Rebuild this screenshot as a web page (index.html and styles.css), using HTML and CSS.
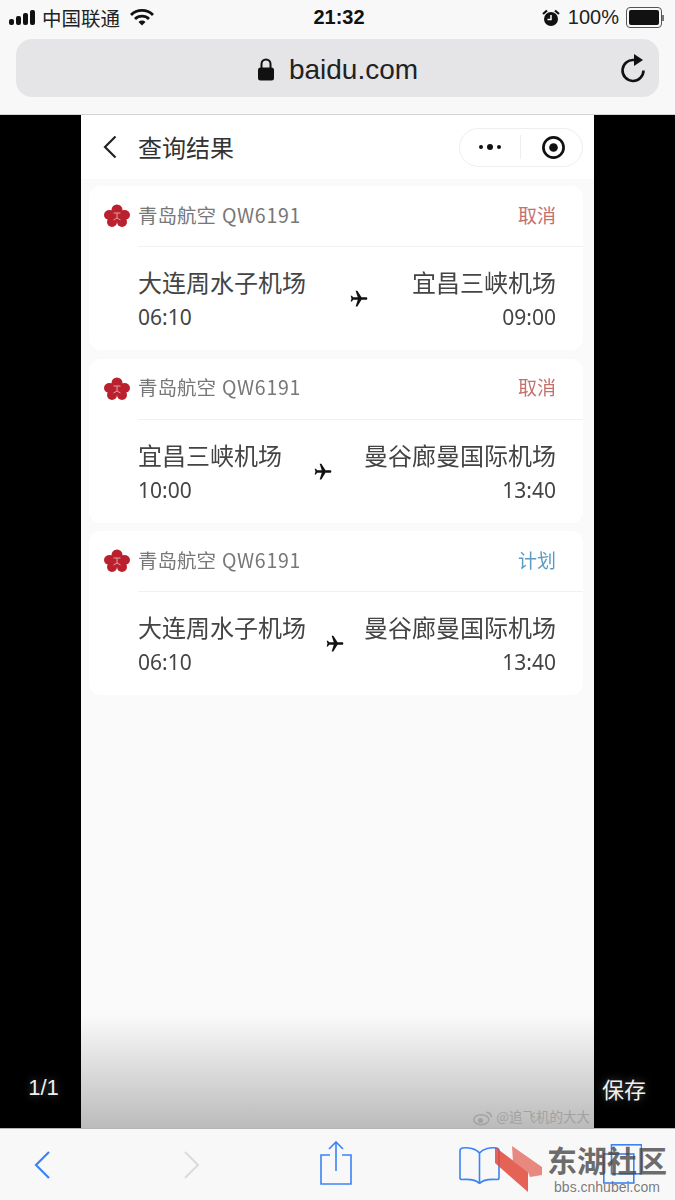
FILE: index.html
```html
<!DOCTYPE html>
<html lang="zh">
<head>
    <meta charset="UTF-8">
    <meta name="viewport" content="width=device-width, initial-scale=1.0">
    <title>baidu.com</title>
    <link rel="stylesheet" href="styles.css">
</head>
<body>
    <div class="screen">
        <div class="chrome">
            <div class="status">
                <div class="status-left">
                    <svg class="signal" width="28" height="16" viewBox="0 0 28 16"><rect x="0" y="9" width="5" height="6" rx="2"/><rect x="7" y="6" width="5" height="9" rx="2"/><rect x="14" y="3" width="5" height="12" rx="2"/><rect x="21" y="0" width="5" height="15" rx="2"/></svg>
                    <span class="carrier">中国联通</span>
                    <svg class="wifi" width="24" height="17" viewBox="0 0 24 17"><path d="M1 6a15.500 15.500 0 0 1 22 0" fill="none" stroke="#111" stroke-width="2.800"/><path d="M5 10a10 10 0 0 1 14 0" fill="none" stroke="#111" stroke-width="2.800"/><path d="M8.500 13a5 5 0 0 1 7 0L12 16.500z" fill="#111"/></svg>
                </div>
                <div class="clock">21:32</div>
                <div class="status-right">
                    <svg width="18" height="18" viewBox="0 0 18 18"><path d="M1 5l4-3.500M17 5l-4-3.500" stroke="#111" stroke-width="2.200" fill="none"/><circle cx="9" cy="10" r="7" fill="#111"/><path d="M9 6v4.500H5.500" stroke="#fff" stroke-width="1.500" fill="none"/></svg>
                    <span class="battery-text">100%</span>
                    <div class="battery"><div class="battery-fill"></div></div>
                    <div class="battery-cap"></div>
                </div>
            </div>
            <div class="urlbar">
                <svg class="lock" width="16" height="23" viewBox="0 0 16 23"><path d="M3.500 11V6a4.500 4.500 0 0 1 9 0v5" fill="none" stroke="#111" stroke-width="2"/><rect x="0" y="9.500" width="16" height="13" rx="2.500" fill="#111"/></svg>
                <span class="domain">baidu.com</span>
                <svg class="reload" width="26" height="30" viewBox="0 0 26 30"><path d="M14 7A10.500 10.500 0 1 0 23.500 17.500" fill="none" stroke="#111" stroke-width="2.600"/><path d="M14 1l9 6-9 6z" fill="#111"/></svg>
            </div>
        </div>

        <div class="viewer">
            <div class="side"><span class="side-label side-count">1/1</span></div>

            <div class="page">
                <div class="nav">
                    <svg class="nav-back" width="14" height="24" viewBox="0 0 14 24"><path d="M12.500 1.500L2 12l10.500 10.500" fill="none" stroke="#222" stroke-width="2.200"/></svg>
                    <span class="nav-title">查询结果</span>
                    <div class="capsule">
                        <svg class="capsule-more" width="24" height="10" viewBox="0 0 24 10"><circle cx="3" cy="5" r="2" fill="#111"/><circle cx="12" cy="5" r="3" fill="#111"/><circle cx="21" cy="5" r="2" fill="#111"/></svg>
                        <div class="capsule-line"></div>
                        <svg class="capsule-close" width="25" height="25" viewBox="0 0 26 26"><circle cx="13" cy="13" r="10.500" fill="none" stroke="#111" stroke-width="2.800"/><circle cx="13" cy="13" r="4.500" fill="#111"/></svg>
                    </div>
                </div>

                <div class="list">
                    <div class="card">
                        <div class="card-head">
                            <svg class="flower" width="26" height="24" viewBox="0 0 26 24"><ellipse cx="13" cy="6" rx="5.500" ry="5.500"/><ellipse cx="5.500" cy="11" rx="5.500" ry="5"/><ellipse cx="20.500" cy="11" rx="5.500" ry="5"/><circle cx="8" cy="18" r="5"/><circle cx="18" cy="18" r="5"/><circle cx="13" cy="12" r="6"/><path d="M9.500 9h7M13 9v5M9.500 16l3.500-2 3.500 2" stroke="#e0a0a4" stroke-width="1" fill="none"/></svg>
                            <span class="airline">青岛航空<span class="flight">QW6191</span></span>
                            <span class="state cancel">取消</span>
                        </div>
                        <div class="route">
                            <div class="stop">
                                <div class="airport">大连周水子机场</div>
                                <div class="time">06:10</div>
                            </div>
                            <svg class="plane" width="20" height="20" viewBox="0 0 24 24"><path transform="rotate(90 12 12)" d="M21 16v-2l-8-5V3.500c0-.830-.670-1.500-1.500-1.500S10 2.670 10 3.500V9l-8 5v2l8-2.500V19l-2 1.500V22l3.500-1 3.500 1v-1.500L13 19v-5.500l8 2.500z"/></svg>
                            <div class="stop stop-end">
                                <div class="airport">宜昌三峡机场</div>
                                <div class="time">09:00</div>
                            </div>
                        </div>
                    </div>

                    <div class="card">
                        <div class="card-head">
                            <svg class="flower" width="26" height="24" viewBox="0 0 26 24"><ellipse cx="13" cy="6" rx="5.500" ry="5.500"/><ellipse cx="5.500" cy="11" rx="5.500" ry="5"/><ellipse cx="20.500" cy="11" rx="5.500" ry="5"/><circle cx="8" cy="18" r="5"/><circle cx="18" cy="18" r="5"/><circle cx="13" cy="12" r="6"/><path d="M9.500 9h7M13 9v5M9.500 16l3.500-2 3.500 2" stroke="#e0a0a4" stroke-width="1" fill="none"/></svg>
                            <span class="airline">青岛航空<span class="flight">QW6191</span></span>
                            <span class="state cancel">取消</span>
                        </div>
                        <div class="route">
                            <div class="stop">
                                <div class="airport">宜昌三峡机场</div>
                                <div class="time">10:00</div>
                            </div>
                            <svg class="plane" width="20" height="20" viewBox="0 0 24 24"><path transform="rotate(90 12 12)" d="M21 16v-2l-8-5V3.500c0-.830-.670-1.500-1.500-1.500S10 2.670 10 3.500V9l-8 5v2l8-2.500V19l-2 1.500V22l3.500-1 3.500 1v-1.500L13 19v-5.500l8 2.500z"/></svg>
                            <div class="stop stop-end">
                                <div class="airport">曼谷廊曼国际机场</div>
                                <div class="time">13:40</div>
                            </div>
                        </div>
                    </div>

                    <div class="card">
                        <div class="card-head">
                            <svg class="flower" width="26" height="24" viewBox="0 0 26 24"><ellipse cx="13" cy="6" rx="5.500" ry="5.500"/><ellipse cx="5.500" cy="11" rx="5.500" ry="5"/><ellipse cx="20.500" cy="11" rx="5.500" ry="5"/><circle cx="8" cy="18" r="5"/><circle cx="18" cy="18" r="5"/><circle cx="13" cy="12" r="6"/><path d="M9.500 9h7M13 9v5M9.500 16l3.500-2 3.500 2" stroke="#e0a0a4" stroke-width="1" fill="none"/></svg>
                            <span class="airline">青岛航空<span class="flight">QW6191</span></span>
                            <span class="state plan">计划</span>
                        </div>
                        <div class="route">
                            <div class="stop">
                                <div class="airport">大连周水子机场</div>
                                <div class="time">06:10</div>
                            </div>
                            <svg class="plane" width="20" height="20" viewBox="0 0 24 24"><path transform="rotate(90 12 12)" d="M21 16v-2l-8-5V3.500c0-.830-.670-1.500-1.500-1.500S10 2.670 10 3.500V9l-8 5v2l8-2.500V19l-2 1.500V22l3.500-1 3.500 1v-1.500L13 19v-5.500l8 2.500z"/></svg>
                            <div class="stop stop-end">
                                <div class="airport">曼谷廊曼国际机场</div>
                                <div class="time">13:40</div>
                            </div>
                        </div>
                    </div>
                </div>

                <div class="fade">
                    <svg width="20" height="16" viewBox="0 0 24 18"><ellipse cx="10" cy="11" rx="9" ry="6" fill="none" stroke="#a2a2a2" stroke-width="1.800"/><circle cx="9" cy="12" r="3" fill="#a2a2a2"/><path d="M16 2a6 6 0 0 1 6 6" fill="none" stroke="#a2a2a2" stroke-width="1.800"/></svg>
                    <span class="mark">@追飞机的大大</span>
                </div>
            </div>

            <div class="side"><span class="side-label side-save">保存</span></div>
        </div>

        <div class="toolbar">
            <svg class="tb-back" width="16" height="28" viewBox="0 0 16 28"><path d="M15 1L2 14l13 13" fill="none" stroke="#3b82f6" stroke-width="2.200"/></svg>
            <svg class="tb-forward" width="16" height="28" viewBox="0 0 16 28"><path d="M1 1l13 13L1 27" fill="none" stroke="#dcdcdc" stroke-width="2.200"/></svg>
            <svg class="tb-share" width="32" height="44" viewBox="0 0 32 44"><path d="M10 14H1v29h30V14h-9" fill="none" stroke="#3b82f6" stroke-width="1.600"/><path d="M16 30V1M9 8l7-7 7 7" fill="none" stroke="#3b82f6" stroke-width="1.600"/></svg>
            <svg class="tb-book" width="41" height="38" viewBox="0 0 41 38"><path d="M20.500 7C17 2.500 9 1 3.500 2 2 2.300 1 3.500 1 5v27c0 1 .8 1.500 2 1.500 7-.5 14 0 17.500 4 3.500-4 10.500-4.500 17.500-4 1.200 0 2-.5 2-1.500V5c0-1.500-1-2.700-2.500-3C31.500 1 24 2.500 20.500 7zM20.500 7v30" fill="none" stroke="#3b82f6" stroke-width="1.600"/></svg>
            <svg class="tb-tabs" width="39" height="40" viewBox="0 0 39 40"><rect x="8.500" y="0.800" width="30" height="29" fill="none" stroke="#3b82f6" stroke-width="1.600"/><rect x="0.800" y="10" width="30" height="29" fill="none" stroke="#3b82f6" stroke-width="1.600"/></svg>
        </div>

        <div class="forum-mark">
            <svg width="48" height="48" viewBox="0 0 48 48"><path d="M0 2l33 25v20L0 18z" fill="#e2483a" opacity=".85"/><path d="M17 1l30 21v8l-12 2-2-5-15-10z" fill="#e4756a" opacity=".85"/></svg>
            <div class="forum-text">
                <div class="forum-name">东湖社区</div>
                <div class="forum-url">bbs.cnhubei.com</div>
            </div>
        </div>
    </div>
</body>
</html>
```

FILE: styles.css
```css
body {
    margin: 0;
    font-family: "Liberation Sans", "Noto Sans CJK SC", sans-serif;
    background-color: #000;
}
.screen {
    position: relative;
    display: flex;
    flex-direction: column;
    width: 675px;
    height: 1200px;
    overflow: hidden;
}

/* browser top */
.chrome {
    height: 114px;
    background-color: #f8f8f8;
    border-bottom: 1px solid #d4d4d4;
}
.status {
    display: flex;
    justify-content: space-between;
    align-items: center;
    height: 35px;
    padding: 0 11px 0 9px;
    color: #111;
    font-size: 19px;
}
.status-left {
    display: flex;
    align-items: center;
    width: 210px;
}
.signal {
    fill: #111;
    margin-right: 5px;
}
.carrier {
    font-family: "Noto Sans CJK SC", sans-serif;
    font-size: 19.500px;
    line-height: 30px;
    color: #222;
}
.wifi {
    margin-left: 10px;
}
.clock {
    margin-left: 5px;
    font-weight: bold;
    font-size: 20px;
}
.status-right {
    display: flex;
    align-items: center;
    justify-content: flex-end;
    width: 210px;
}
.battery-text {
    margin: 0 7px 0 8px;
    font-size: 20px;
    color: #222;
}
.battery {
    width: 30px;
    height: 15px;
    padding: 2px;
    border: 1px solid #555;
    border-radius: 4px;
}
.battery-fill {
    height: 100%;
    background-color: #111;
    border-radius: 2px;
}
.battery-cap {
    width: 2px;
    height: 6px;
    background-color: #777;
}
.urlbar {
    position: relative;
    display: flex;
    align-items: center;
    justify-content: center;
    gap: 15px;
    height: 55px;
    margin: 4px 16px 0;
    padding-top: 3px;
    padding-left: 1px;
    background-color: #e5e5e8;
    border-radius: 16px;
}
.domain {
    font-size: 28px;
    color: #222;
}
.reload {
    position: absolute;
    right: 13px;
    top: 14px;
}

/* photo viewer */
.viewer {
    display: flex;
    height: 1013px;
    background-color: #000;
}
.side {
    display: flex;
    justify-content: center;
    align-items: flex-end;
    width: 81px;
    padding-bottom: 26px;
    box-sizing: border-box;
}
.side-label {
    color: #f0f0f0;
    font-size: 22px;
    line-height: 28px;
    text-shadow: 0 0 8px rgba(255, 255, 255, 0.35);
}
.side-count {
    margin-left: 6px;
}
.side-save {
    font-family: "Noto Sans CJK SC", sans-serif;
    margin-right: 21px;
}
.page {
    display: flex;
    flex-direction: column;
    width: 513px;
    background-color: #fafafa;
}
.nav {
    display: flex;
    align-items: center;
    height: 64px;
    padding: 0 11px 0 22px;
    background-color: #fff;
}
.nav-title {
    margin-left: 21px;
    margin-bottom: 2px;
    font-family: "Noto Sans CJK SC", sans-serif;
    font-size: 24px;
    color: #333;
}
.capsule {
    display: flex;
    align-items: center;
    width: 124px;
    height: 39px;
    margin-left: auto;
    padding-left: 18px;
    box-sizing: border-box;
    background-color: #fff;
    border: 1px solid #eee;
    border-radius: 20px;
}
.capsule-line {
    width: 1px;
    height: 24px;
    margin-left: 18px;
    background-color: #eee;
}
.capsule-close {
    margin-left: 20px;
}
.list {
    display: flex;
    flex-direction: column;
    gap: 8.500px;
    padding: 7px 11px 0 8px;
    filter: blur(0.4px);
}
.card {
    height: 164px;
    padding-left: 15px;
    background-color: #fff;
    border-radius: 12px;
}
.card-head {
    display: flex;
    align-items: center;
    height: 60px;
}
.flower {
    fill: #bb202e;
    margin-right: 8px;
}
.airline {
    margin-bottom: 4px;
    font-family: "Noto Sans CJK SC", sans-serif;
    font-size: 19.500px;
    color: #777;
}
.flight {
    margin-left: 6px;
    letter-spacing: 0.7px;
}
.state {
    margin-left: auto;
    margin-right: 27px;
    margin-bottom: 4px;
    font-family: "Noto Sans CJK SC", sans-serif;
    font-size: 19px;
}
.cancel {
    color: #c4706e;
}
.plan {
    color: #5b9cc4;
}
.route {
    display: flex;
    justify-content: space-between;
    align-items: center;
    margin-left: 34px;
    padding: 17px 27px 0 0;
    border-top: 1px solid #f1f1f1;
}
.stop-end {
    text-align: right;
}
.airport {
    font-family: "Noto Sans CJK SC", sans-serif;
    font-size: 24px;
    line-height: 36px;
    color: #444;
}
.time {
    font-family: "Noto Sans", sans-serif;
    font-size: 21px;
    line-height: 34px;
    color: #444;
}
.plane {
    fill: #111;
}
.fade {
    display: flex;
    align-items: flex-end;
    justify-content: flex-end;
    gap: 3px;
    height: 113px;
    margin-top: auto;
    padding: 0 4px 2px 0;
    box-sizing: border-box;
    background: linear-gradient(#fafafa, #bbb);
}
.mark {
    font-family: "Noto Sans CJK SC", sans-serif;
    font-size: 13.500px;
    color: #a2a2a2;
}

/* browser bottom */
.toolbar {
    display: flex;
    align-items: flex-start;
    flex: 1;
    padding-left: 34px;
    background-color: #f8f8f8;
    border-top: 1px solid #b4b4b4;
}
.tb-back {
    margin-top: 22px;
}
.tb-forward {
    margin: 22px 0 0 134px;
}
.tb-share {
    margin: 12px 0 0 120px;
}
.tb-book {
    margin: 17px 0 0 107px;
}
.tb-tabs {
    margin: 15px 0 0 103px;
}

/* forum watermark over the toolbar */
.forum-mark {
    position: absolute;
    left: 495px;
    top: 1145px;
    display: flex;
    gap: 3px;
}
.forum-text {
    width: 122px;
    text-align: center;
}
.forum-name {
    font-size: 30px;
    font-weight: bold;
    line-height: 34px;
    color: rgba(70, 70, 70, 0.8);
}
.forum-url {
    margin-top: 1px;
    font-size: 14px;
    line-height: 14px;
    color: rgba(100, 100, 100, 0.85);
}
```
